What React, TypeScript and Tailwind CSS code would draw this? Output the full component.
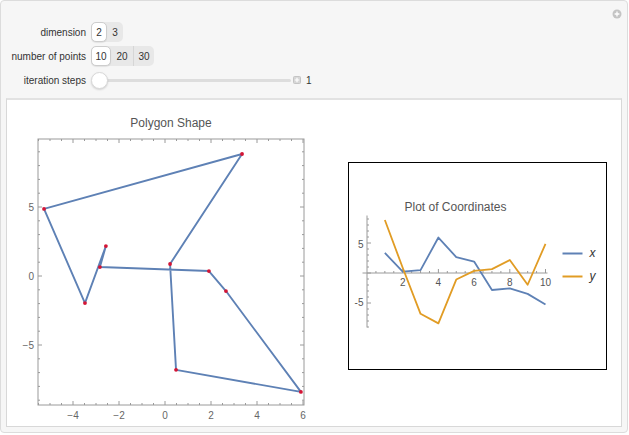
import React from "react";

const BLUE = "#5e81b5";
const ORANGE = "#e19c24";
const RED = "#d41535";

// vertices in the order the polygon is drawn
const pts: [number, number][] = [
  [3.35, 8.84], [0.22, 0.87], [0.48, -6.8], [5.91, -8.4], [2.65, -1.09],
  [1.91, 0.36], [-2.83, 0.65], [-2.57, 2.17], [-3.48, -1.96], [-5.26, 4.86],
];

const range = (a: number, b: number, s: number) => {
  const out: number[] = [];
  for (let v = a; v <= b + 1e-9; v += s) out.push(Math.round(v * 100) / 100);
  return out;
};

function PolygonPlot() {
  const px = (x: number) => 165 + 23 * x;
  const py = (y: number) => 275 - 13.8 * y;
  const L = 38, R = 304, T = 138, B = 404;
  const d = pts.map(([x, y], i) => `${i ? "L" : "M"}${px(x)} ${py(y)}`).join(" ") + " Z";
  const xt = range(-5.5, 6, 0.5).filter((v) => px(v) >= L && px(v) <= R);
  const yt = range(-9, 9, 1);
  return (
    <svg width={333} height={322} className="shrink-0">
      <g transform="translate(-7 -99)" fontFamily="'Liberation Sans', Arial, sans-serif">
        <text x={171} y={126} fontSize={12} fill="#555" textAnchor="middle">Polygon Shape</text>
        <rect x={L} y={T} width={R - L} height={B - T} fill="none" stroke="#9a9a9a" strokeWidth={1} />
        {xt.map((v) => {
          const len = v % 2 === 0 ? 4 : 2;
          return (
            <g key={"x" + v} stroke="#9a9a9a" strokeWidth={1}>
              <line x1={px(v)} x2={px(v)} y1={B} y2={B - len} />
              <line x1={px(v)} x2={px(v)} y1={T} y2={T + len} />
            </g>
          );
        })}
        {yt.map((v) => {
          const len = v % 5 === 0 ? 4 : 2;
          return (
            <g key={"y" + v} stroke="#9a9a9a" strokeWidth={1}>
              <line x1={L} x2={L + len} y1={py(v)} y2={py(v)} />
              <line x1={R} x2={R - len} y1={py(v)} y2={py(v)} />
            </g>
          );
        })}
        {[5, 0, -5].map((v) => (
          <text key={v} x={34} y={py(v) + 3.5} fontSize={10} fill="#666" textAnchor="end">
            {v < 0 ? "\u2212" + -v : v}
          </text>
        ))}
        {[-4, -2, 0, 2, 4, 6].map((v) => (
          <text key={v} x={px(v)} y={417.5} fontSize={10} fill="#666" textAnchor="middle">
            {v < 0 ? "\u2212" + -v : v}
          </text>
        ))}
        <path d={d} fill="none" stroke={BLUE} strokeWidth={1.9} strokeLinejoin="round" />
        {pts.map(([x, y], i) => (
          <circle key={i} cx={px(x)} cy={py(y)} r={1.9} fill={RED} />
        ))}
      </g>
    </svg>
  );
}

function CoordinatesPlot() {
  const px = (i: number) => 367.5 + 17.85 * i;
  const py = (v: number) => 272.5 - 6 * v;
  const line = (k: 0 | 1) =>
    pts.map((p, i) => `${i ? "L" : "M"}${px(i + 1)} ${py(p[k])}`).join(" ");
  return (
    <div className="ml-[8px] mt-[62px] h-[208px] w-[259px] shrink-0 border-[1.5px] border-black bg-white">
      <svg width={256} height={205}>
        <g transform="translate(-349.5 -162.5)" fontFamily="'Liberation Sans', Arial, sans-serif">
          <text x={456} y={210} fontSize={12} fill="#555" textAnchor="middle">Plot of Coordinates</text>
          <line x1={363} x2={548} y1={272.5} y2={272.5} stroke="#9a9a9a" />
          <line x1={367.5} x2={367.5} y1={215} y2={327} stroke="#9a9a9a" />
          {range(-9, 9, 1).map((v) => (
            <line key={v} x1={367.5} x2={367.5 + (v % 5 === 0 ? 4 : 2)} y1={py(v)} y2={py(v)} stroke="#9a9a9a" />
          ))}
          {range(0.5, 10, 0.5).map((v) => (
            <line key={v} x1={px(v)} x2={px(v)} y1={272.5} y2={272.5 - (v % 2 === 0 ? 4 : 2)} stroke="#9a9a9a" />
          ))}
          <text x={364} y={247.5} fontSize={10} fill="#555" textAnchor="end">5</text>
          <text x={364} y={305.5} fontSize={10} fill="#555" textAnchor="end">-5</text>
          {[2, 4, 6, 8, 10].map((v) => (
            <text key={v} x={px(v)} y={285} fontSize={10} fill="#555" textAnchor="middle">{v}</text>
          ))}
          <path d={line(0)} fill="none" stroke={BLUE} strokeWidth={1.8} strokeLinejoin="round" />
          <path d={line(1)} fill="none" stroke={ORANGE} strokeWidth={1.8} strokeLinejoin="round" />
          <line x1={563} x2={583} y1={253} y2={253} stroke={BLUE} strokeWidth={2} />
          <text x={590} y={256.5} fontSize={12} fontStyle="italic" fill="#333">x</text>
          <line x1={563} x2={583} y1={276} y2={276} stroke={ORANGE} strokeWidth={2} />
          <text x={590} y={279.5} fontSize={12} fontStyle="italic" fill="#333">y</text>
        </g>
      </svg>
    </div>
  );
}

function Setter({ items, widths, selected }: { items: string[]; widths: number[]; selected: number }) {
  return (
    <div className="flex h-[20px] items-stretch rounded-[5px] bg-[#e8e8e8]">
      {items.map((t, i) => (
        <div
          key={t}
          style={{ width: widths[i] }}
          className={
            i === selected
              ? "flex items-center justify-center rounded-[5px] border border-[#cdcdcd] bg-white shadow-[0_1px_1px_rgba(0,0,0,0.08)]"
              : "flex items-center justify-center " + (i > selected + 1 ? "border-l border-[#d6d6d6]" : "")
          }
        >
          {t}
        </div>
      ))}
    </div>
  );
}

function Row({ label, children }: { label: string; children: React.ReactNode }) {
  return (
    <div className="flex h-[20px] items-center">
      <div className="w-[85px] text-right">{label}</div>
      <div className="ml-[5px] flex items-center">{children}</div>
    </div>
  );
}

export default function App() {
  return (
    <div className="h-[435px] w-[629px] bg-white" style={{ fontFamily: "'Liberation Sans', Arial, sans-serif" }}>
      <div className="relative h-[433px] w-[628px] rounded-[4px] border border-[#dcdcdc] bg-[#f6f6f6] text-[10px] text-[#333]">
        <svg width={10} height={10} className="absolute left-[611px] top-[8px]">
          <circle cx={5} cy={5} r={4.5} fill="#c4c4c4" />
          <path d="M5 2.6V7.4M2.6 5H7.4" stroke="#fff" strokeWidth={1.3} />
        </svg>
        <div className="flex flex-col gap-[4px] pt-[21px]">
          <Row label="dimension">
            <Setter items={["2", "3"]} widths={[16, 16]} selected={0} />
          </Row>
          <Row label="number of points">
            <Setter items={["10", "20", "30"]} widths={[20, 22, 21]} selected={0} />
          </Row>
          <Row label="iteration steps">
            <div className="relative flex h-[17px] w-[200px] items-center">
              <div className="ml-[9px] h-[3px] flex-1 rounded-full bg-[#dddddd]" />
              <div className="absolute left-0 top-0 h-[17px] w-[17px] rounded-full border border-[#d8d8d8] bg-white shadow-[0_1px_2px_rgba(0,0,0,0.15)]" />
            </div>
            <svg width={8} height={8} className="ml-[2px]">
              <rect x={0.5} y={0.5} width={7} height={7} rx={1} fill="#d6d6d6" stroke="#c4c4c4" />
              <path d="M4 1.8V6.2M1.8 4H6.2" stroke="#fff" strokeWidth={1.2} />
            </svg>
            <span className="ml-[5px]">1</span>
          </Row>
        </div>
        <div className="mx-[5px] mt-[8px] flex h-[329px] overflow-hidden border border-[#d8d8d8] border-t-[2px] border-t-[#e2e2e2] bg-white">
          <PolygonPlot />
          <CoordinatesPlot />
        </div>
      </div>
    </div>
  );
}
